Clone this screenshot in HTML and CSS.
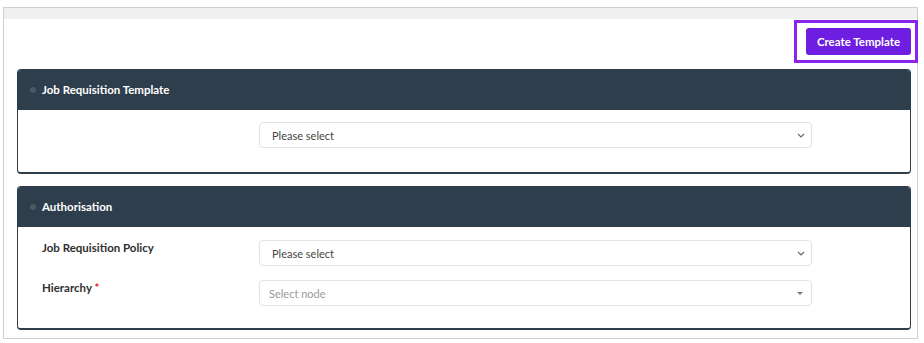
FILE: index.html
```html
<!DOCTYPE html>
<html lang="en">
<head>
  <meta charset="UTF-8" />
  <meta name="viewport" content="width=device-width, initial-scale=1.0" />
  <title>Job Requisition Settings</title>
  <link rel="stylesheet" href="styles.css">
</head>
<body>
  <div class="page">
    <div class="top-strip"></div>

    <div class="toolbar">
      <div class="focus-ring">
        <button class="btn-primary">Create Template</button>
      </div>
    </div>

    <section class="panel">
      <div class="panel-head">
        <span class="dot"></span>
        <span class="panel-title">Job Requisition Template</span>
      </div>
      <div class="panel-body">
        <div class="form-row">
          <label class="form-label"></label>
          <div class="select">
            <span>Please select</span>
            <svg class="chev" width="8" height="5" viewBox="0 0 8 5"><path d="M1 1l3 3 3-3" fill="none" stroke="#666" stroke-width="1.1"/></svg>
          </div>
        </div>
      </div>
    </section>

    <section class="panel">
      <div class="panel-head">
        <span class="dot"></span>
        <span class="panel-title">Authorisation</span>
      </div>
      <div class="panel-body">
        <div class="form-row">
          <label class="form-label">Job Requisition Policy</label>
          <div class="select">
            <span>Please select</span>
            <svg class="chev" width="8" height="5" viewBox="0 0 8 5"><path d="M1 1l3 3 3-3" fill="none" stroke="#666" stroke-width="1.1"/></svg>
          </div>
        </div>
        <div class="form-row">
          <label class="form-label">Hierarchy <span class="req">*</span></label>
          <div class="select placeholder">
            <span>Select node</span>
            <span class="caret"></span>
          </div>
        </div>
      </div>
    </section>
  </div>
</body>
</html>
```

FILE: styles.css
```css
* {
  margin: 0;
  padding: 0;
  box-sizing: border-box;
}

body {
  background: #ffffff;
  font-family: 'Lato', 'Noto Sans', sans-serif;
  font-size: 11px;
  color: #333;
}

.page {
  margin: 7px 6px 0 3px;
  height: 332px;
  border: 1px solid #cfcfcf;
  background: #ffffff;
}

.top-strip {
  height: 11px;
  background: #f0f0f0;
}

.toolbar {
  display: flex;
  justify-content: flex-end;
  margin-right: -1px;
}

.focus-ring {
  margin-top: 1px;
  width: 124px;
  height: 43px;
  border: 3px solid #8a23ee;
  display: flex;
  align-items: center;
  padding-left: 9px;
}

.btn-primary {
  width: 105px;
  height: 27px;
  background: #6d1ee0;
  color: #ffffff;
  border: none;
  border-radius: 3px;
  font-family: inherit;
  font-size: 11.5px;
  font-weight: 700;
  cursor: pointer;
}

.panel {
  margin: 6px 6px 0 13px;
  border: 1px solid #2f3e4c;
  border-bottom-width: 2px;
  border-radius: 4px;
  overflow: hidden;
}

.panel + .panel {
  margin-top: 12px;
}

.panel-head {
  height: 40px;
  background: #2f3e4c;
  display: flex;
  align-items: center;
  padding: 0 0 1px 12px;
  gap: 6px;
}

.dot {
  width: 6px;
  height: 6px;
  border-radius: 50%;
  background: #4a5968;
}

.panel-title {
  color: #ffffff;
  font-weight: 700;
  font-size: 11.5px;
}

.panel-body {
  padding: 12px 0 24px 24px;
  display: flex;
  flex-direction: column;
  gap: 14px;
}

.panel + .panel .panel-body {
  padding-top: 13px;
  padding-bottom: 22px;
}

.form-row {
  display: flex;
  align-items: flex-start;
}

.form-label {
  width: 217px;
  padding-top: 1px;
  font-weight: 700;
  font-size: 11.5px;
  color: #2f2f2f;
}

.req {
  color: #e8141b;
}

.select {
  width: 553px;
  height: 26px;
  border: 1px solid #e2e2e2;
  border-radius: 4px;
  display: flex;
  align-items: center;
  justify-content: space-between;
  padding: 0 6px 0 12px;
  color: #444;
}

.select.placeholder {
  padding-left: 9px;
  color: #999;
}

.caret {
  width: 0;
  height: 0;
  border-left: 3px solid transparent;
  border-right: 3px solid transparent;
  border-top: 3px solid #777;
  margin-right: 2px;
}
```
